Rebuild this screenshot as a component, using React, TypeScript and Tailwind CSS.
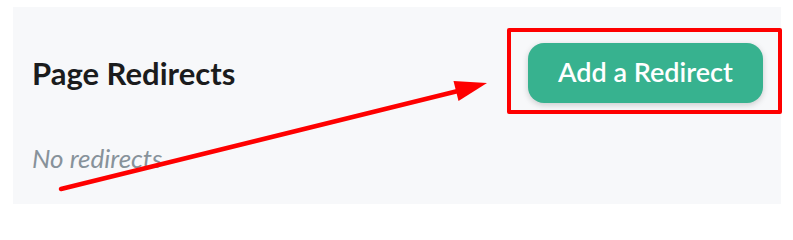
export default function App() {
  return (
    <div className="relative h-[221px] w-[793px] bg-white pl-[13px] pr-[12px] pt-[7px] font-['Lato',sans-serif]">
      <div className="h-[197px] bg-[#f7f8fa] pl-[19px] pr-[18px] pt-[36px]">
        <div className="flex items-center justify-between">
          <h2 className="text-[31px] font-bold leading-none text-[#1b1c1d]">Page Redirects</h2>
          <button
            type="button"
            className="flex h-[60px] w-[235px] items-center justify-center rounded-[16px] bg-[#37b28f] pb-[1px] text-[27px] font-semibold text-white shadow-[0_2px_6px_rgba(0,0,0,0.18)]"
          >
            Add a Redirect
          </button>
        </div>
        <p className="mt-[42px] text-[26px] italic leading-none text-[#87929a]">No redirects</p>
      </div>

      {/* annotation overlay */}
      <div className="pointer-events-none absolute left-[507px] top-[28px] h-[86px] w-[275px] rounded-[2px] border-[4px] border-[#fe0000]" />
      <svg className="pointer-events-none absolute left-0 top-0" width="793" height="221" aria-hidden>
        <line x1="61" y1="189" x2="462" y2="90" stroke="#fe0000" strokeWidth="4.5" strokeLinecap="round" />
        <polygon points="487,83 453.5,81 458.5,101" fill="#fe0000" />
      </svg>
    </div>
  );
}
